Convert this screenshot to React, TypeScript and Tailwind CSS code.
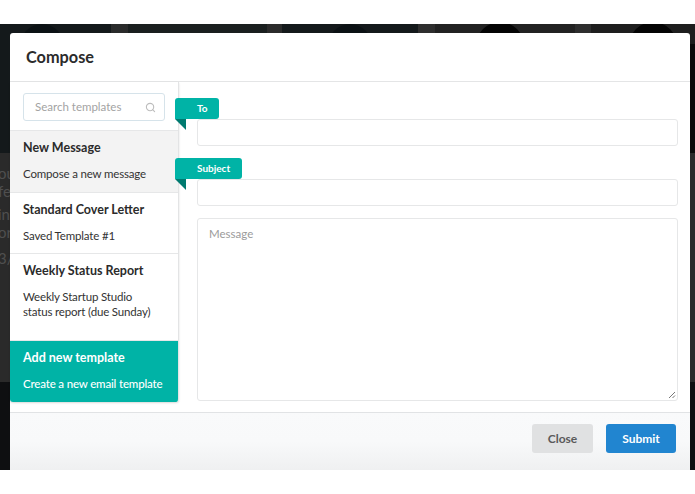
import { Search } from "lucide-react";

function Tag({ label, className }: { label: string; className: string }) {
  return (
    <div className={`absolute left-[175px] ${className}`}>
      <div className="h-[21px] rounded-r-[3px] rounded-tl-[3px] bg-[#00b3a6] pl-[22px] text-[10px] font-bold leading-[21px] text-white">
        {label}
      </div>
      <div className="h-0 w-0 border-l-[11px] border-t-[11px] border-l-transparent border-t-[#007a70]" />
    </div>
  );
}

function Item({ title, sub, className }: { title: string; sub: React.ReactNode; className: string }) {
  return (
    <div className={`border-b border-[#e6e7e8] pl-[13px] pt-[9px] ${className}`}>
      <div className="text-[12.5px] font-bold leading-[16px] text-[#2b2b2b]">{title}</div>
      <div className="mt-[10px] text-[11.5px] leading-[15px] tracking-[-0.17px] text-[#333]">{sub}</div>
    </div>
  );
}

export default function App() {
  return (
    <div className="relative h-[494px] w-[695px] overflow-hidden bg-white font-['Lato','Liberation_Sans',sans-serif]">
      <div className="mt-[24px] flex h-[446px] flex-col">
        <svg className="block shrink-0" width="695" height="129" viewBox="0 0 695 129">
          <rect width="695" height="129" fill="#14191b" />
          <rect x="111" width="17" height="129" fill="#2a2b2b" />
          <rect x="128" width="139" height="129" fill="#1a1f1f" />
          <rect x="267" width="15" height="129" fill="#2b2b2b" />
          <rect x="418" width="17" height="129" fill="#2e2e2e" />
          <rect x="435" width="140" height="129" fill="#222222" />
          <rect x="575" width="16" height="129" fill="#2e2e2e" />
          <rect x="591" width="104" height="129" fill="#1e1e1e" />
          <circle cx="42" cy="22" r="22" fill="#0b1114" />
          <circle cx="350" cy="22" r="22" fill="#0b1114" />
          <circle cx="500" cy="22" r="24" fill="#040404" />
          <circle cx="653" cy="22" r="24" fill="#040404" />
          <rect x="690" y="20" width="5" height="109" fill="#0a0a0a" />
        </svg>
        <div className="h-[229px] bg-[#2a2a2a] pt-[11px] text-[15px] leading-[18px] text-[#4f4f4f]">
          <div className="w-[10px] overflow-hidden whitespace-nowrap">
            <div className="-ml-[2px]">ou</div>
            <div className="-ml-[2px]">fe</div>
            <div className="-ml-[2px] mt-[5px]">in</div>
            <div className="-ml-[2px]">or</div>
            <div className="-ml-[2px] mt-[8px]">3/</div>
          </div>
        </div>
        <div className="flex-1 bg-[#0e0f11]" />
      </div>

      <div role="dialog" className="absolute left-[10px] top-[33px] flex h-[437px] w-[680px] flex-col rounded-t-[3px] bg-white">
        <div className="flex h-[49px] shrink-0 items-center border-b border-[#e4e5e6] pl-[16px] text-[16.3px] font-bold text-[#2b2b2b]">
          Compose
        </div>
        <div className="flex h-[331px] shrink-0 border-b border-[#e1e3e5]">
          <div className="h-[320px] w-[169px] shrink-0 overflow-hidden rounded-b-[3px] border-r border-[#e3e4e5] shadow-[0_1px_2px_rgba(0,0,0,0.15)]">
            <div className="h-[49px] border-b border-[#e6e7e8] pl-[13px] pt-[11px]">
              <div className="flex h-[28px] w-[142px] items-center justify-between rounded-[3px] border border-[#d6e3ea] pl-[11px] pr-[8px] text-[11.5px] text-[#a3a3a3]">
                Search templates
                <Search size={11} strokeWidth={2.4} className="text-[#bdbdbd]" />
              </div>
            </div>
            <Item className="h-[62px] bg-[#f3f3f3]" title="New Message" sub="Compose a new message" />
            <Item className="h-[61px] bg-white" title="Standard Cover Letter" sub="Saved Template #1" />
            <Item
              className="h-[87px] bg-white"
              title="Weekly Status Report"
              sub={
                <>
                  Weekly Startup Studio
                  <br />
                  status report (due Sunday)
                </>
              }
            />
            <div className="h-[61px] bg-[#00b3a6] pl-[13px] pt-[9px] text-white">
              <div className="text-[12.5px] font-bold leading-[16px]">Add new template</div>
              <div className="mt-[10px] text-[11.5px] font-medium leading-[15px] tracking-[-0.17px]">Create a new email template</div>
            </div>
          </div>
          <div className="flex flex-1 flex-col pl-[18px] pr-[12px] pt-[37px]">
            <div className="h-[27px] rounded-[3px] border border-[#e6e7e8]" />
            <div className="mt-[33px] h-[27px] rounded-[3px] border border-[#e6e7e8]" />
            <div className="relative mt-[12px] h-[183px] rounded-[3px] border border-[#e6e7e8] px-[11px] py-[6px] text-[11.5px] text-[#9b9b9b]">
              Message
              <svg className="absolute bottom-[1px] right-[1px]" width="8" height="8" viewBox="0 0 8 8">
                <path d="M1 7 7 1M4.5 7 7 4.5" stroke="#777" strokeWidth="1" fill="none" />
              </svg>
            </div>
          </div>
        </div>
        <div className="flex flex-1 items-start justify-end gap-[13px] bg-gradient-to-b from-[#f9fafb] via-[#f8f9fa] to-[#eff0f1] pr-[14px] pt-[11px]">
          <button className="h-[29px] w-[61px] rounded-[3px] bg-[#e0e1e2] text-[12px] font-bold text-[#5a5a5a]">Close</button>
          <button className="h-[29px] w-[70px] rounded-[3px] bg-[#2185d0] text-[12px] font-bold text-white">Submit</button>
        </div>
      </div>

      <Tag label="To" className="top-[98px] w-[44px]" />
      <Tag label="Subject" className="top-[158px] w-[67px]" />
    </div>
  );
}
